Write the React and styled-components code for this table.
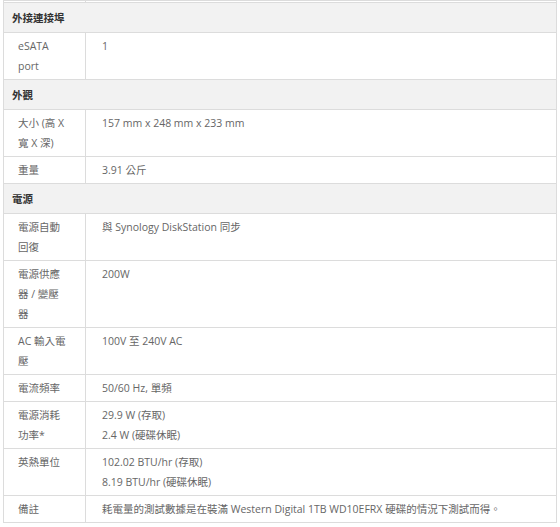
import React from "react";
import styled, { createGlobalStyle } from "styled-components";

const GlobalStyle = createGlobalStyle`
  body {
    margin: 0;
    background: #ffffff;
  }
`;

const Page = styled.div`
  padding: 0 3px;
  font-family: "Open Sans", "Noto Sans CJK TC", sans-serif;
`;

const SpecTable = styled.table`
  width: 554px;
  border-collapse: collapse;
  table-layout: fixed;
  border: 1px solid #dcdcdc;
  font-size: 10.5px;
  line-height: 20px;
  color: #666;
`;

const Cell = styled.td`
  border: 1px solid #dcdcdc;
  padding: 3px 14px 3px 14px;
  vertical-align: top;
  word-wrap: break-word;
`;

const KeyCell = styled(Cell)`
  padding-right: 18px;
`;

const ValueCell = styled(Cell)`
  padding-left: 16px;
`;

const StubCell = styled.td`
  border: 1px solid #dcdcdc;
  border-top: none;
  height: 1px;
  padding: 0;
`;

const SectionCell = styled.td`
  background: #f2f2f2;
  border: 1px solid #dcdcdc;
  padding: 5px 8px 4px;
  font-weight: 700;
  color: #333;
  line-height: 20px;
`;

const sections = [
  {
    title: "外接連接埠",
    rows: [["eSATA port", ["1"]]],
  },
  {
    title: "外觀",
    rows: [
      ["大小 (高 X 寬 X 深)", ["157 mm x 248 mm x 233 mm"]],
      ["重量", ["3.91 公斤"]],
    ],
  },
  {
    title: "電源",
    rows: [
      ["電源自動回復", ["與 Synology DiskStation 同步"]],
      ["電源供應器 / 變壓器", ["200W"]],
      ["AC 輸入電壓", ["100V 至 240V AC"]],
      ["電流頻率", ["50/60 Hz, 單頻"]],
      ["電源消耗功率*", ["29.9 W (存取)", "2.4 W (硬碟休眠)"]],
      ["英熱單位", ["102.02 BTU/hr (存取)", "8.19 BTU/hr (硬碟休眠)"]],
      [
        "備註",
        ["耗電量的測試數據是在裝滿 Western Digital 1TB WD10EFRX 硬碟的情況下測試而得。"],
      ],
    ],
  },
];

const App = () => {
  return (
    <Page>
      <GlobalStyle />
      <SpecTable>
        <colgroup>
          <col style={{ width: "82px" }} />
          <col />
        </colgroup>
        <tbody>
          <tr>
            <StubCell />
            <StubCell />
          </tr>
          {sections.map((section) => (
            <React.Fragment key={section.title}>
              <tr>
                <SectionCell colSpan={2}>{section.title}</SectionCell>
              </tr>
              {section.rows.map(([key, values]) => (
                <tr key={key}>
                  <KeyCell>{key}</KeyCell>
                  <ValueCell>
                    {values.map((v) => (
                      <div key={v}>{v}</div>
                    ))}
                  </ValueCell>
                </tr>
              ))}
            </React.Fragment>
          ))}
        </tbody>
      </SpecTable>
    </Page>
  );
};

export default App;
